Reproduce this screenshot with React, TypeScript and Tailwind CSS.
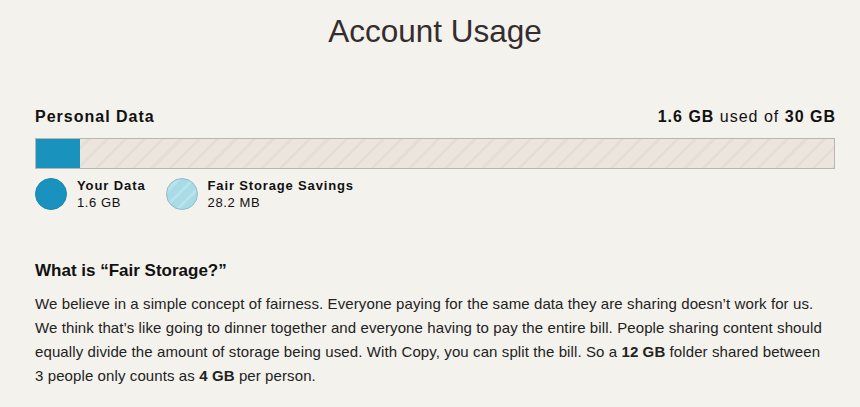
import React from "react";

export default function App() {
  return (
    <div className="w-[860px] h-[407px] overflow-hidden bg-[#f4f2ed] text-[#222] font-['Liberation_Sans',Arial,sans-serif]">
      <div className="pl-[35px] pr-[25px]">
        <h1 className="text-center text-[31.5px] leading-none text-[#352d2d] pt-[16px]">Account Usage</h1>
        <div className="mt-[61px] flex justify-between items-end text-[16px] leading-none tracking-[1px] text-[#111]">
          <span className="font-bold">Personal Data</span>
          <span className="-mr-[1px]">
            <b>1.6 GB</b> used of <b>30 GB</b>
          </span>
        </div>
        <div
          className="mt-[13px] h-[31px] border border-[#b9b5af] flex"
          style={{
            backgroundImage:
              "repeating-linear-gradient(135deg, #ece5de 0px, #ece5de 10px, #e6ded6 10px, #e6ded6 13px)",
          }}
        >
          <div className="w-[44px] h-full bg-[#1993bd]" />
        </div>
        <div className="mt-[8px] flex items-start gap-[20px]">
          <div className="flex items-center gap-[10px]">
            <div className="w-[32px] h-[32px] rounded-full bg-[#1993bd] border border-[#1a88ae]" />
            <div className="text-[13px] leading-[17px] text-[#111] tracking-[0.6px]">
              <div className="font-bold tracking-[0.9px]">Your Data</div>
              <div>1.6 GB</div>
            </div>
          </div>
          <div className="flex items-center gap-[10px]">
            <div
              className="w-[32px] h-[32px] rounded-full border border-[#8bbcc8]"
              style={{
                backgroundImage:
                  "repeating-linear-gradient(135deg, #a9dbe7 0px, #a9dbe7 7px, #b9e3ec 7px, #b9e3ec 10px)",
              }}
            />
            <div className="text-[13px] leading-[17px] text-[#111] tracking-[0.6px]">
              <div className="font-bold tracking-[0.85px]">Fair Storage Savings</div>
              <div>28.2 MB</div>
            </div>
          </div>
        </div>
        <h2 className="mt-[51px] text-[17px] leading-none font-bold text-[#111]">What is “Fair Storage?”</h2>
        <p className="mt-[13px] text-[15px] leading-[24px] tracking-[0.1px] text-[#222] whitespace-nowrap">
          We believe in a simple concept of fairness. Everyone paying for the same data they are sharing doesn’t work for us.
          <br />
          We think that’s like going to dinner together and everyone having to pay the entire bill. People sharing content should
          <br />
          equally divide the amount of storage being used. With Copy, you can split the bill. So a <b>12 GB</b> folder shared between
          <br />
          3 people only counts as <b>4 GB</b> per person.
        </p>
      </div>
    </div>
  );
}
